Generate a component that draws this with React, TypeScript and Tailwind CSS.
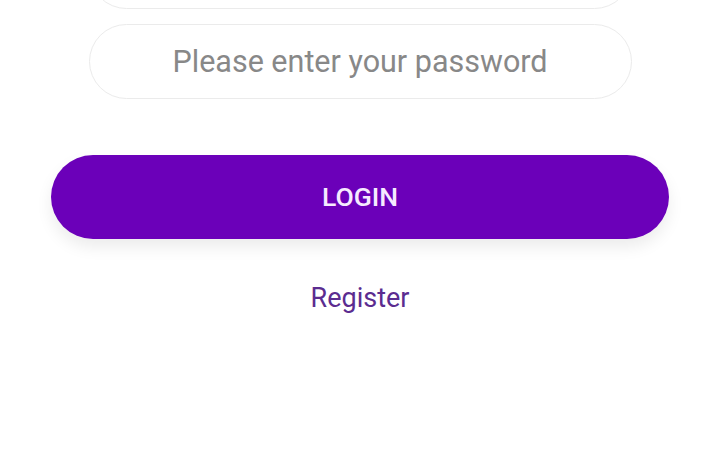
import React, { useState } from 'react';

const App: React.FC = () => {
  const [email, setEmail] = useState('');
  const [password, setPassword] = useState('');

  return (
    <div className="w-[720px] h-[450px] overflow-hidden bg-white font-['Roboto',sans-serif]">
      <div className="flex flex-col items-center mt-[-66px]">
        <input
          value={email}
          onChange={(e) => setEmail(e.target.value)}
          placeholder="Please enter your email"
          className="w-[543px] h-[75px] rounded-full border border-[#ebebeb] text-center text-[30.5px] text-[#555] placeholder:text-[#888888] outline-none"
        />
        <input
          type="password"
          value={password}
          onChange={(e) => setPassword(e.target.value)}
          placeholder="Please enter your password"
          className="mt-[15px] w-[543px] h-[75px] rounded-full border border-[#ebebeb] text-center text-[30.5px] text-[#555] placeholder:text-[#888888] outline-none"
        />
        <button className="mt-[56px] w-[618px] h-[84px] rounded-full bg-[#6b00b9] text-[#f6eaff] text-[26.5px] font-medium shadow-[0_8px_16px_rgba(0,0,0,0.08)]">
          LOGIN
        </button>
        <a href="#" className="mt-[44px] text-[27px] leading-[30px] text-[#5b2c90]">
          Register
        </a>
      </div>
    </div>
  );
};

export default App;
